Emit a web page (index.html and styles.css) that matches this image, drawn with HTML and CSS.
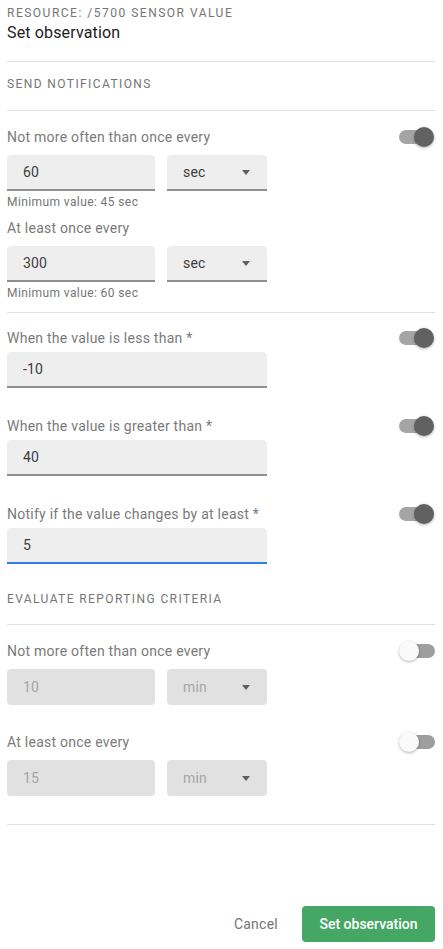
FILE: index.html
```html
<!DOCTYPE html>
<html lang="en">
<head>
<meta charset="utf-8">
<title>Set observation</title>
<link rel="stylesheet" href="styles.css">
</head>
<body>
<div class="page">
  <header class="head">
    <div class="eyebrow">Resource: /5700 Sensor value</div>
    <h1 class="title">Set observation</h1>
  </header>
  <div class="divider"></div>

  <h2 class="section-heading">Send notifications</h2>
  <div class="divider"></div>

  <section class="group group-first">
    <div class="item item-pair">
      <div class="label-row">
        <span class="label">Not more often than once every</span>
        <span class="switch on"><span class="track"></span><span class="thumb"></span></span>
      </div>
      <div class="pair">
        <div class="field field-num">60</div>
        <div class="field field-select"><span>sec</span><span class="arrow"></span></div>
      </div>
      <div class="helper">Minimum value: 45 sec</div>
    </div>
    <div class="item item-pair item-last">
      <div class="label-row">
        <span class="label">At least once every</span>
      </div>
      <div class="pair">
        <div class="field field-num">300</div>
        <div class="field field-select"><span>sec</span><span class="arrow"></span></div>
      </div>
      <div class="helper">Minimum value: 60 sec</div>
    </div>
  </section>
  <div class="divider"></div>

  <section class="group group-values">
    <div class="item item-single">
      <div class="label-row">
        <span class="label">When the value is less than *</span>
        <span class="switch on"><span class="track"></span><span class="thumb"></span></span>
      </div>
      <div class="field field-wide">-10</div>
    </div>
    <div class="item item-single">
      <div class="label-row">
        <span class="label">When the value is greater than *</span>
        <span class="switch on"><span class="track"></span><span class="thumb"></span></span>
      </div>
      <div class="field field-wide">40</div>
    </div>
    <div class="item item-single">
      <div class="label-row">
        <span class="label">Notify if the value changes by at least *</span>
        <span class="switch on"><span class="track"></span><span class="thumb"></span></span>
      </div>
      <div class="field field-wide field-focused">5</div>
    </div>
  </section>

  <h2 class="section-heading section-heading-2">Evaluate reporting criteria</h2>
  <div class="divider"></div>

  <section class="group group-eval">
    <div class="item item-pair">
      <div class="label-row">
        <span class="label">Not more often than once every</span>
        <span class="switch off"><span class="track"></span><span class="thumb"></span></span>
      </div>
      <div class="pair">
        <div class="field field-num disabled">10</div>
        <div class="field field-select disabled"><span>min</span><span class="arrow"></span></div>
      </div>
    </div>
    <div class="item item-pair">
      <div class="label-row">
        <span class="label">At least once every</span>
        <span class="switch off"><span class="track"></span><span class="thumb"></span></span>
      </div>
      <div class="pair">
        <div class="field field-num disabled">15</div>
        <div class="field field-select disabled"><span>min</span><span class="arrow"></span></div>
      </div>
    </div>
  </section>
  <div class="divider"></div>

  <footer class="footer">
    <button class="btn btn-text" type="button">Cancel</button>
    <button class="btn btn-primary" type="button">Set observation</button>
  </footer>
</div>
</body>
</html>
```

FILE: styles.css
```css
* { box-sizing: border-box; }
html, body { margin: 0; padding: 0; background: #ffffff; }
body {
  font-family: Roboto, "Noto Sans", "Liberation Sans", sans-serif;
  color: #212121;
}
.page {
  min-height: 100vh;
  display: flex;
  flex-direction: column;
  padding: 5px 8px 7px 7px;
}
.head { margin-bottom: 16px; }
.eyebrow {
  font-size: 12px;
  line-height: 16px;
  letter-spacing: 1.5px;
  text-transform: uppercase;
  color: #757575;
}
.title {
  margin: 0;
  font-size: 16px;
  line-height: 24px;
  font-weight: 400;
  letter-spacing: 0.15px;
  color: #212121;
}
.divider { height: 1px; background: #e0e0e0; flex: none; }
.section-heading {
  margin: 14px 0 18px;
  font-size: 12px;
  line-height: 16px;
  font-weight: 400;
  letter-spacing: 1.4px;
  text-transform: uppercase;
  color: #757575;
}
.section-heading-2 { margin: 27px 0 17px; }
.group { display: flex; flex-direction: column; }
.group-first { padding: 16px 0 11px; }
.group-values { padding-top: 15px; gap: 28px; }
.group-eval { padding: 16px 0 28px; gap: 27px; }
.item { display: flex; flex-direction: column; }
.item-pair { gap: 8px; }
.item-single { gap: 4px; }
.group-first .item-pair:first-child { margin-bottom: 8px; }
.label-row {
  display: flex;
  align-items: center;
  justify-content: space-between;
  height: 20px;
}
.label {
  font-size: 14px;
  line-height: 20px;
  letter-spacing: 0.25px;
  color: #7a7a7a;
}
.pair { display: flex; gap: 12px; }
.field {
  height: 36px;
  display: flex;
  align-items: center;
  padding: 0 16px;
  background: #eeeeee;
  border-radius: 4px 4px 0 0;
  border-bottom: 2px solid #8e8e8e;
  font-size: 14px;
  letter-spacing: 0.15px;
  color: #3c3c3c;
}
.field-num { width: 148px; }
.field-select { width: 100px; justify-content: space-between; padding-right: 17px; }
.field-wide { width: 260px; }
.field-focused { border-bottom-color: #2f7df0; }
.field.disabled {
  background: #e1e1e1;
  border-radius: 4px;
  border-bottom: 0;
  color: #a6a6a6;
}
.arrow {
  width: 0;
  height: 0;
  border-left: 4px solid transparent;
  border-right: 4px solid transparent;
  border-top: 5px solid #5f5f5f;
}
.helper {
  margin-top: -5px;
  font-size: 12px;
  line-height: 16px;
  letter-spacing: 0.4px;
  color: #757575;
}
.switch {
  position: relative;
  width: 36px;
  height: 20px;
  flex: none;
}
.switch .track {
  position: absolute;
  top: 3px;
  height: 14px;
  width: 34px;
  border-radius: 7px;
}
.switch .thumb {
  position: absolute;
  top: 0;
  width: 20px;
  height: 20px;
  border-radius: 50%;
  box-shadow: 0 1px 3px rgba(0,0,0,0.3);
}
.switch.on .track { left: 0; background: #a5a5a5; }
.switch.on .thumb { right: 1px; background: #616161; }
.switch.off .track { right: 0; background: #9e9e9e; }
.switch.off .thumb { left: 0; background: #fafafa; }
.footer {
  margin-top: auto;
  display: flex;
  justify-content: flex-end;
  align-items: center;
  gap: 8px;
}
.btn {
  font-family: inherit;
  font-size: 14px;
  letter-spacing: 0.25px;
  height: 36px;
  border: 0;
  border-radius: 4px;
  padding: 0 16px;
  white-space: nowrap;
  cursor: pointer;
}
.btn-text { background: transparent; color: #757575; }
.btn-primary {
  background: #45a764;
  color: #ffffff;
  font-weight: 500;
  letter-spacing: 0;
  width: 133px;
  padding: 0;
  text-align: center;
}
```
